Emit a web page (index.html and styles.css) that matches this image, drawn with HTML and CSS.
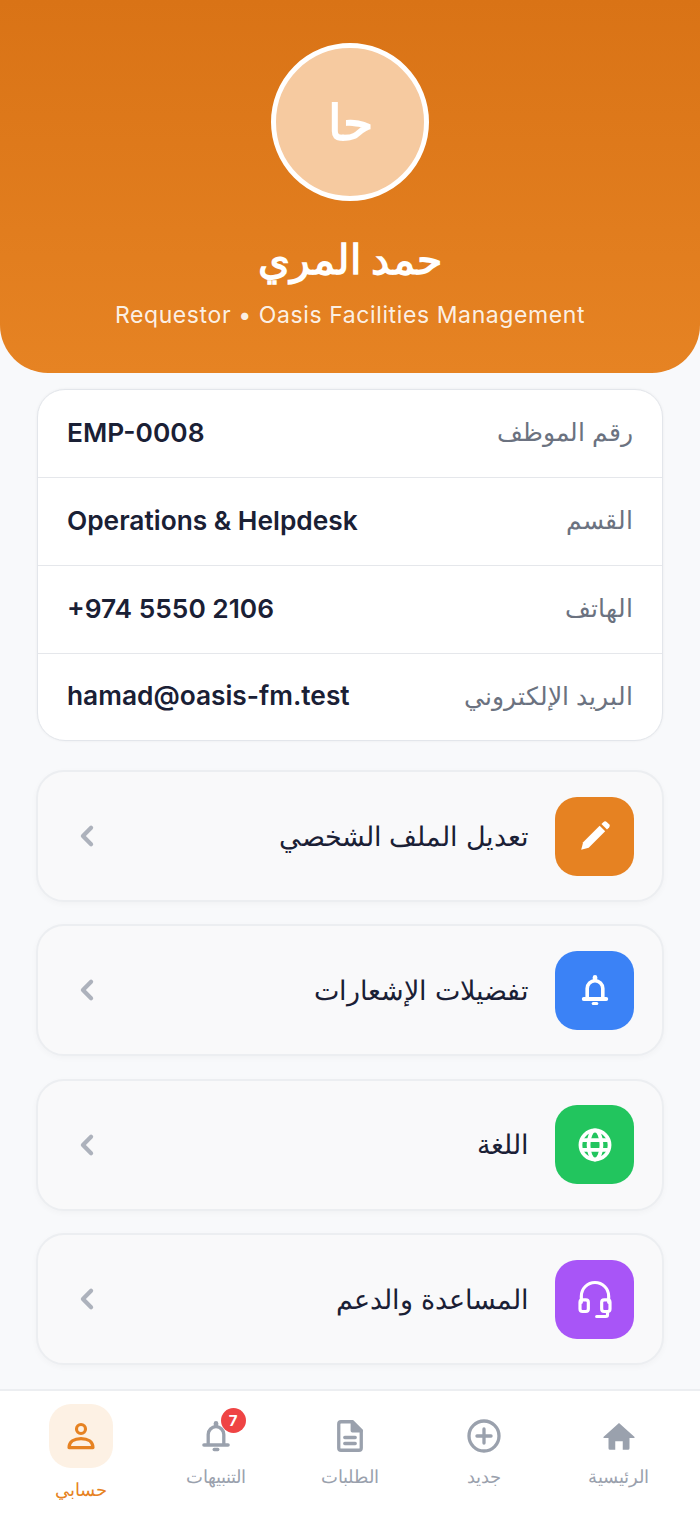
FILE: index.html
```html
<!DOCTYPE html>
<html lang="ar" dir="rtl">

<head>
    <meta charset="UTF-8">
    <meta name="viewport" content="width=device-width, initial-scale=1.0">
    <title>حسابي</title>
    <link rel="stylesheet" href="styles.css">
</head>

<body>

    <div class="page">
        <header class="hero">
            <div class="avatar">حا</div>
            <h1 class="hero-name">حمد المري</h1>
            <p class="hero-sub" dir="ltr">Requestor • Oasis Facilities Management</p>
        </header>

        <section class="info-card">
            <div class="info-row">
                <span class="info-label">رقم الموظف</span>
                <span class="info-value" dir="ltr">EMP-0008</span>
            </div>
            <div class="info-row">
                <span class="info-label">القسم</span>
                <span class="info-value" dir="ltr">Operations &amp; Helpdesk</span>
            </div>
            <div class="info-row">
                <span class="info-label">الهاتف</span>
                <span class="info-value" dir="ltr">+974 5550 2106</span>
            </div>
            <div class="info-row">
                <span class="info-label">البريد الإلكتروني</span>
                <span class="info-value" dir="ltr">hamad@oasis-fm.test</span>
            </div>
        </section>

        <section class="menu">
            <a class="menu-item">
                <span class="menu-icon orange">
                    <svg viewBox="0 0 24 24" width="36" height="36" fill="#fff"><path d="M2.800 21.200l1.300-5 11-11 3.700 3.700-11 11-5 1.300z"/><path d="M16.300 4l1.400-1.400a1.500 1.500 0 0 1 2.100 0l1.600 1.600a1.500 1.500 0 0 1 0 2.100L20 7.700 16.300 4z"/></svg>
                </span>
                <span class="menu-text">تعديل الملف الشخصي</span>
                <svg class="chev" viewBox="0 0 24 24" width="28" height="28" fill="none" stroke="#adb2bc" stroke-width="3.600" stroke-linecap="round" stroke-linejoin="round"><path d="M15.500 5l-7 7 7 7"/></svg>
            </a>
            <a class="menu-item">
                <span class="menu-icon blue">
                    <svg viewBox="0 0 24 24" width="36" height="36" fill="none" stroke="#fff" stroke-width="2.400" stroke-linecap="round" stroke-linejoin="round"><path d="M6.800 17.500V11a5.200 5.200 0 0 1 10.400 0v6.500"/><path d="M4.500 18h15" stroke-width="2.600"/><path d="M12 3.500v1.500" stroke-width="3"/><path d="M10.800 21h2.400" stroke-width="2"/></svg>
                </span>
                <span class="menu-text">تفضيلات الإشعارات</span>
                <svg class="chev" viewBox="0 0 24 24" width="28" height="28" fill="none" stroke="#adb2bc" stroke-width="3.600" stroke-linecap="round" stroke-linejoin="round"><path d="M15.500 5l-7 7 7 7"/></svg>
            </a>
            <a class="menu-item">
                <span class="menu-icon green">
                    <svg viewBox="0 0 24 24" width="36" height="36" fill="none" stroke="#fff" stroke-width="2.500"><circle cx="12" cy="12" r="9.700"/><ellipse cx="12" cy="12" rx="4.300" ry="9.700"/><path d="M3 8.800h18M3 15.200h18"/></svg>
                </span>
                <span class="menu-text">اللغة</span>
                <svg class="chev" viewBox="0 0 24 24" width="28" height="28" fill="none" stroke="#adb2bc" stroke-width="3.600" stroke-linecap="round" stroke-linejoin="round"><path d="M15.500 5l-7 7 7 7"/></svg>
            </a>
            <a class="menu-item">
                <span class="menu-icon purple">
                    <svg viewBox="0 0 24 24" width="40" height="40" fill="none" stroke="#fff" stroke-width="1.900" stroke-linecap="round" stroke-linejoin="round"><path d="M3.800 14v-3.700a8.200 8.200 0 0 1 16.400 0V14"/><rect x="3" y="12.500" width="5" height="7" rx="1.500"/><rect x="16" y="12.500" width="5" height="7" rx="1.500"/><path d="M19.500 19.500v2a1 1 0 0 1-1 1H13"/></svg>
                </span>
                <span class="menu-text">المساعدة والدعم</span>
                <svg class="chev" viewBox="0 0 24 24" width="28" height="28" fill="none" stroke="#adb2bc" stroke-width="3.600" stroke-linecap="round" stroke-linejoin="round"><path d="M15.500 5l-7 7 7 7"/></svg>
            </a>
        </section>
    </div>

    <nav class="tabbar">
        <a class="tab">
            <span class="tab-icon">
                <svg viewBox="0 0 24 24" width="36" height="36" fill="#9aa1ad"><path d="M12 3.300L1.800 12.500a.5.5 0 0 0 .3.900H5v6.800a1 1 0 0 0 1 1h3.500v-5.700h5v5.700H18a1 1 0 0 0 1-1v-6.800h2.900a.5.5 0 0 0 .3-.9L12 3.300z"/></svg>
            </span>
            <span class="tab-label">الرئيسية</span>
        </a>
        <a class="tab">
            <span class="tab-icon">
                <svg viewBox="0 0 24 24" width="36" height="36" fill="none" stroke="#9aa1ad" stroke-width="2.200" stroke-linecap="round"><circle cx="12" cy="12" r="10"/><path d="M12 7.300v9.400M7.300 12h9.400"/></svg>
            </span>
            <span class="tab-label">جديد</span>
        </a>
        <a class="tab">
            <span class="tab-icon">
                <svg viewBox="0 0 24 24" width="36" height="36" fill="none" stroke="#9aa1ad" stroke-width="2.200" stroke-linecap="round" stroke-linejoin="round"><path d="M13.500 2.500H6a1.500 1.500 0 0 0-1.500 1.500v16A1.500 1.500 0 0 0 6 21.500h12a1.500 1.500 0 0 0 1.500-1.500V8.500l-6-6z"/><path d="M13.500 2.500v6h6z" fill="#9aa1ad"/><path d="M8.500 13h7M8.500 17h7"/></svg>
            </span>
            <span class="tab-label">الطلبات</span>
        </a>
        <a class="tab">
            <span class="tab-icon">
                <svg viewBox="0 0 24 24" width="36" height="36" fill="none" stroke="#9aa1ad" stroke-width="2.200" stroke-linecap="round" stroke-linejoin="round"><path d="M6.800 17.500V11a5.200 5.200 0 0 1 10.400 0v6.500"/><path d="M4 18h16" stroke-width="2.400"/><path d="M12 3.500v1.500" stroke-width="3"/><path d="M10.800 21h2.400"/></svg>
                <span class="badge">7</span>
            </span>
            <span class="tab-label">التنبيهات</span>
        </a>
        <a class="tab active">
            <span class="tab-icon">
                <svg viewBox="0 0 24 24" width="36" height="36" fill="none" stroke="#e68222" stroke-width="2.100" stroke-linecap="round" stroke-linejoin="round"><circle cx="12" cy="7.300" r="3"/><path d="M4 19.700c0-4 3.500-6 8-6s8 2 8 6z"/></svg>
            </span>
            <span class="tab-label">حسابي</span>
        </a>
    </nav>

</body>

</html>
```

FILE: styles.css
```css
body,
html {
    margin: 0;
    padding: 0;
    height: 100%;
    font-family: Inter, "Noto Sans", sans-serif;
    background-color: #f8f9fb;
    overflow: hidden;
}

body {
    display: flex;
    flex-direction: column;
}

.page {
    flex: 1;
    min-height: 0;
}

.hero {
    height: 373px;
    box-sizing: border-box;
    padding-top: 43px;
    display: flex;
    flex-direction: column;
    align-items: center;
    background: linear-gradient(180deg, #d97316, #e68323);
    border-radius: 0 0 48px 48px;
    color: white;
}

.avatar {
    width: 158px;
    height: 158px;
    box-sizing: border-box;
    border: 5px solid white;
    border-radius: 50%;
    background-color: #f6caa0;
    display: flex;
    align-items: center;
    justify-content: center;
    font-size: 49px;
    font-weight: 700;
}

.hero-name {
    margin: 30px 0 0;
    font-size: 41px;
    line-height: 56px;
    font-weight: 700;
}

.hero-sub {
    margin: 12px 0 0;
    font-size: 23px;
    line-height: 32px;
    letter-spacing: 0.6px;
    color: rgba(255, 255, 255, 0.9);
}

.info-card {
    margin: 16px 37px 0;
    background-color: white;
    border: 1px solid #e3e6eb;
    border-radius: 28px;
    box-shadow: 0 0 3px rgba(0, 0, 0, 0.06);
    overflow: hidden;
}

.info-row {
    height: 88px;
    box-sizing: border-box;
    padding: 0 29px;
    display: flex;
    align-items: center;
    justify-content: space-between;
    border-bottom: 1px solid #e5e7eb;
}

.info-row:last-child {
    height: 86px;
    border-bottom: none;
}

.info-label {
    padding-bottom: 3px;
    font-size: 24.500px;
    color: #6b7280;
}

.info-value {
    padding-bottom: 3px;
    font-size: 26.300px;
    font-weight: 600;
    color: #1a2035;
}

.menu {
    margin: 29px 36px 0;
    display: flex;
    flex-direction: column;
    gap: 22.400px;
}

.menu-item {
    height: 132px;
    box-sizing: border-box;
    padding: 0 28px 0 35px;
    display: flex;
    align-items: center;
    gap: 26px;
    background-color: #f9f9fa;
    border: 2px solid #eceef1;
    border-radius: 28px;
    box-shadow: 0 2px 6px rgba(0, 0, 0, 0.03);
}

.menu-icon {
    width: 79px;
    height: 79px;
    border-radius: 22px;
    display: flex;
    align-items: center;
    justify-content: center;
    flex-shrink: 0;
}

.orange {
    background-color: #e68222;
}

.blue {
    background-color: #3b82f6;
}

.green {
    background-color: #22c55e;
}

.purple {
    background-color: #a855f7;
}

.menu-text {
    flex: 1;
    font-size: 27px;
    color: #1a2035;
}

.chev {
    flex-shrink: 0;
}

.tabbar {
    height: 126px;
    box-sizing: border-box;
    padding: 13px 14px 0;
    display: flex;
    background-color: white;
    border-top: 2px solid #eceef1;
}

.tab {
    flex: 1;
    display: flex;
    flex-direction: column;
    align-items: center;
    color: #9aa1ad;
}

.tab-icon {
    position: relative;
    width: 64px;
    height: 50px;
    margin-top: 7px;
    border-radius: 22px;
    display: flex;
    align-items: center;
    justify-content: center;
}

.tab-label {
    margin-top: 3px;
    font-size: 18px;
    line-height: 26px;
}

.active .tab-icon {
    height: 64px;
    margin-top: 0;
    background-color: #fdf1e4;
}

.active .tab-label {
    margin-top: 9px;
    color: #e68222;
}

.badge {
    position: absolute;
    top: -3px;
    left: 37px;
    width: 25px;
    height: 25px;
    border-radius: 50%;
    background-color: #ef4444;
    color: white;
    font-size: 15px;
    font-weight: 700;
    display: flex;
    align-items: center;
    justify-content: center;
}
```
